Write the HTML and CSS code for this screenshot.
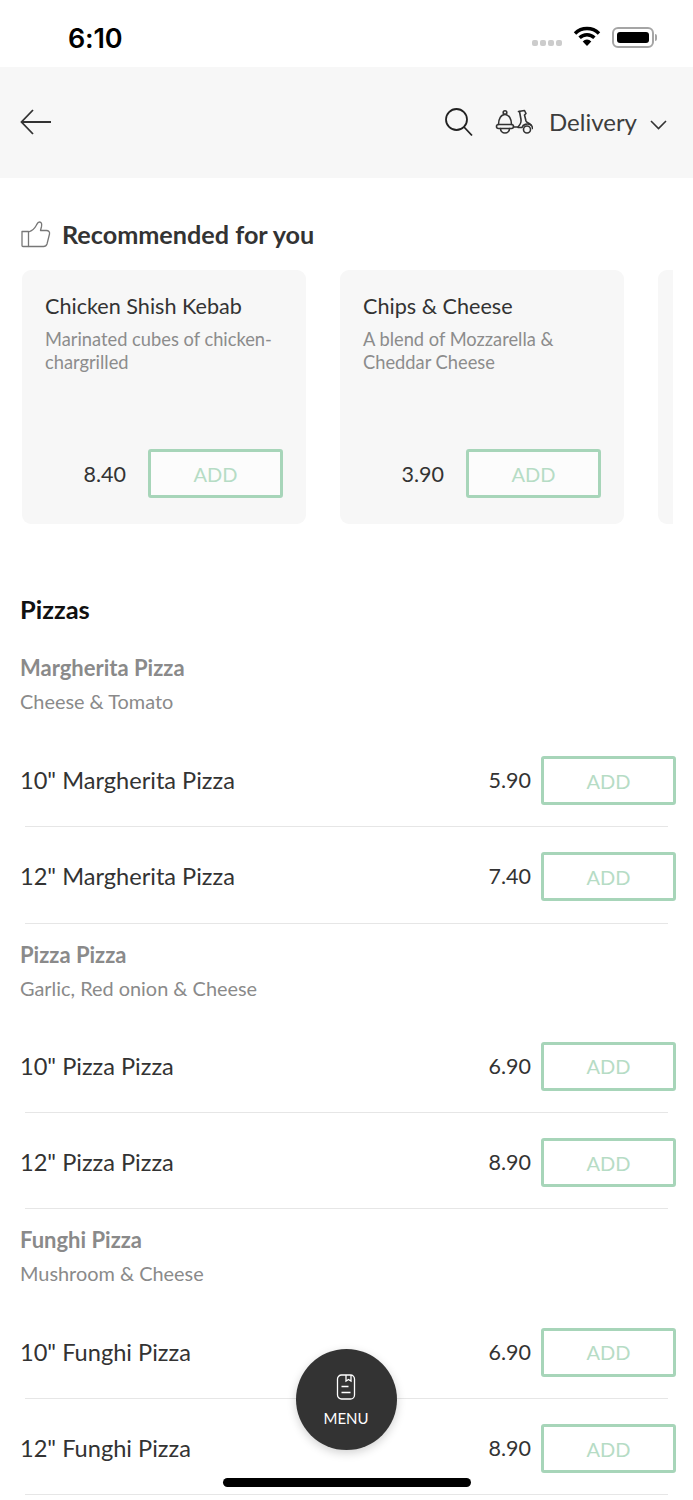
FILE: index.html
```html
<!DOCTYPE html>
<html lang="en">

<head>
    <meta charset="UTF-8">
    <meta name="viewport" content="width=device-width, initial-scale=1.0">
    <title>Menu</title>
    <link rel="stylesheet" href="styles.css">
</head>

<body>
    <div class="status">
        <div class="time">6:10</div>
        <div class="status-icons">
            <div class="signal"><i></i><i></i><i></i><i></i></div>
            <svg class="wifi" width="28" height="22" viewBox="0 0 28 22">
                <path d="M2 8.500a17 17 0 0 1 24 0" fill="none" stroke="#000" stroke-width="3.400" />
                <path d="M6.600 12.800a10.500 10.500 0 0 1 14.800 0" fill="none" stroke="#000" stroke-width="3.400" />
                <path d="M14 21l-4.300-4.600a6 6 0 0 1 8.600 0z" fill="#000" />
            </svg>
            <div class="battery"><div class="battery-fill"></div></div>
            <div class="battery-cap"></div>
        </div>
    </div>

    <div class="header">
        <svg class="back" width="32" height="28" viewBox="0 0 32 28">
            <path d="M31 14H2M13 2L1.500 14L13 26" fill="none" stroke="#333" stroke-width="1.800" />
        </svg>
        <div class="header-right">
            <svg class="search" width="30" height="30" viewBox="0 0 30 30">
                <circle cx="12.500" cy="12.500" r="10.500" fill="none" stroke="#222" stroke-width="1.800" />
                <path d="M20 20l8 8.500" fill="none" stroke="#222" stroke-width="1.800" />
            </svg>
            <svg class="scooter" width="38" height="26" viewBox="0 0 38 26">
                <g fill="none" stroke="#333" stroke-width="1.600" stroke-linejoin="round" stroke-linecap="round">
                    <circle cx="10" cy="3.500" r="1.800" />
                    <path d="M3.500 15.500c0-5.500 2.500-10 6.500-10s6.500 4.500 6.500 10" />
                    <rect x="1.500" y="15.500" width="17" height="4" rx="2" />
                    <path d="M5.500 19.500a4.500 4.500 0 0 0 9 0" />
                    <path d="M23.500 2.500l6-1 1.500 3-1.500 1.500 1.500 6c.5 1.500 3 2 5 4 1 1 1.500 2 1.500 3.500" />
                    <path d="M24.500 2.500l1.500 8c.5 3-1 5.500-3 7.500H18.500" />
                    <path d="M23 18.500h4c1-3 5-4.500 9-2.500" />
                    <circle cx="32" cy="20.500" r="3.500" />
                </g>
            </svg>
            <span class="delivery">Delivery</span>
            <svg class="chevron" width="17" height="10" viewBox="0 0 17 10">
                <path d="M1 1l7.500 7.500L16 1" fill="none" stroke="#333" stroke-width="1.600" />
            </svg>
        </div>
    </div>

    <div class="rec-title">
        <svg width="30" height="27" viewBox="0 0 30 27">
            <g fill="none" stroke="#777" stroke-width="1.300" stroke-linejoin="round">
                <path d="M1 10.500h6.500v15H2a1 1 0 0 1-1-1z" />
                <path d="M7.500 11c3-1 6.500-4 8-7 .8-1.600 1.200-3 3-3 2 0 2.500 2 2 4.500L19.500 9.500h6c2 0 3.500 1.500 3 3.500l-2.500 10c-.5 1.500-1.500 2.500-3.500 2.500H7.500" />
            </g>
        </svg>
        <span>Recommended for you</span>
    </div>

    <div class="cards">
        <div class="card">
            <div class="card-name">Chicken Shish Kebab</div>
            <div class="card-desc">Marinated cubes of chicken-chargrilled</div>
            <div class="card-foot">
                <span class="price">8.40</span>
                <div class="add">ADD</div>
            </div>
        </div>
        <div class="card">
            <div class="card-name">Chips &amp; Cheese</div>
            <div class="card-desc">A blend of Mozzarella &amp; Cheddar Cheese</div>
            <div class="card-foot">
                <span class="price">3.90</span>
                <div class="add">ADD</div>
            </div>
        </div>
        <div class="card"></div>
    </div>

    <h2 class="section-title">Pizzas</h2>

    <div class="group first">
        <div class="group-name">Margherita Pizza</div>
        <div class="group-desc">Cheese &amp; Tomato</div>
    </div>
    <div class="row">
        <span class="row-name">10" Margherita Pizza</span>
        <span class="price">5.90</span>
        <div class="add">ADD</div>
    </div>
    <div class="row">
        <span class="row-name">12" Margherita Pizza</span>
        <span class="price">7.40</span>
        <div class="add">ADD</div>
    </div>

    <div class="group">
        <div class="group-name">Pizza Pizza</div>
        <div class="group-desc">Garlic, Red onion &amp; Cheese</div>
    </div>
    <div class="row">
        <span class="row-name">10" Pizza Pizza</span>
        <span class="price">6.90</span>
        <div class="add">ADD</div>
    </div>
    <div class="row">
        <span class="row-name">12" Pizza Pizza</span>
        <span class="price">8.90</span>
        <div class="add">ADD</div>
    </div>

    <div class="group">
        <div class="group-name">Funghi Pizza</div>
        <div class="group-desc">Mushroom &amp; Cheese</div>
    </div>
    <div class="row">
        <span class="row-name">10" Funghi Pizza</span>
        <span class="price">6.90</span>
        <div class="add">ADD</div>
    </div>
    <div class="row">
        <span class="row-name">12" Funghi Pizza</span>
        <span class="price">8.90</span>
        <div class="add">ADD</div>
    </div>

    <div class="menu-btn">
        <svg width="20" height="26" viewBox="0 0 20 26">
            <g fill="none" stroke="#fff" stroke-width="1.300">
                <rect x="1.500" y="1" width="17" height="24" rx="4" />
                <path d="M10 1v6l2.500-1.500L15 7V1" />
                <path d="M5.500 12.500h7M5.500 18.500h9" />
            </g>
        </svg>
        <span>MENU</span>
    </div>
    <div class="home-bar"></div>
</body>

</html>
```

FILE: styles.css
```css
* {
    box-sizing: border-box;
}

body {
    margin: 0;
    height: 1500px;
    overflow: hidden;
    position: relative;
    background-color: #fff;
    color: #333;
    font-family: Lato, "Open Sans", sans-serif;
}

.status {
    height: 67px;
    display: flex;
    justify-content: space-between;
    align-items: center;
    padding: 8px 36px 0 68px;
}

.time {
    font-family: Inter, Roboto, sans-serif;
    font-size: 27px;
    font-weight: 600;
    color: #000;
    letter-spacing: -.2px;
    margin-top: 2px;
}

.status-icons {
    display: flex;
    align-items: center;
}

.signal {
    display: flex;
    gap: 2px;
    margin: 10px 11px 0 0;
}

.signal i {
    width: 6px;
    height: 6px;
    border-radius: 2px;
    background-color: #ccc;
}

.wifi {
    margin: -4px 11px 0 0;
}

.battery {
    width: 42px;
    height: 21px;
    padding: 3px;
    border: 2px solid #a5a5a5;
    border-radius: 6px;
}

.battery-fill {
    height: 100%;
    background-color: #000;
    border-radius: 3px;
}

.battery-cap {
    width: 2px;
    height: 7px;
    margin-left: 1px;
    background-color: #a5a5a5;
    border-radius: 0 2px 2px 0;
}

.header {
    height: 111px;
    display: flex;
    justify-content: space-between;
    align-items: center;
    padding: 0 26px 2px 20px;
    background-color: #f7f7f7;
}

.header-right {
    display: flex;
    align-items: center;
}

.search {
    margin-right: 21px;
}

.scooter {
    margin-right: 16px;
}

.delivery {
    font-size: 24px;
    color: #3d3d3d;
    margin-right: 13px;
}

.chevron {
    margin-top: 6px;
}

.rec-title {
    display: flex;
    align-items: center;
    gap: 11px;
    height: 92px;
    padding: 20px 0 0 21px;
    font-size: 25.200px;
    font-weight: 700;
    color: #333;
}

.cards {
    display: flex;
    gap: 34px;
    margin-left: 22px;
    overflow: hidden;
    width: 651px;
}

.card {
    flex: 0 0 284px;
    height: 254px;
    padding: 22px 23px 26px;
    display: flex;
    flex-direction: column;
    background-color: #f7f7f7;
    border-radius: 9px;
}

.card-name {
    font-size: 21.600px;
    line-height: 28px;
    color: #333;
}

.card-desc {
    margin-top: 8px;
    font-size: 18.300px;
    line-height: 22.500px;
    color: #8c8c8c;
}

.card-foot {
    margin-top: auto;
    display: flex;
    justify-content: flex-end;
    align-items: center;
    gap: 22px;
}

.price {
    font-size: 21.500px;
    color: #333;
}

.add {
    width: 135px;
    height: 49px;
    display: flex;
    justify-content: center;
    align-items: center;
    border: 3px solid #a7d5b9;
    border-radius: 3px;
    background-color: #fcfcfc;
    color: #b6dcc5;
    font-size: 20px;
}

.section-title {
    margin: 70px 0 0 20px;
    font-size: 25.500px;
    line-height: 30px;
    font-weight: 700;
    color: #111;
}

.group {
    height: 93.300px;
    padding: 16px 0 0 20px;
}

.group.first {
    height: 107px;
    padding-top: 29px;
}

.group-name {
    font-size: 22px;
    line-height: 30px;
    font-weight: 700;
    color: #8a8a8a;
}

.group-desc {
    margin-top: 3px;
    font-size: 19.900px;
    line-height: 30px;
    color: #8a8a8a;
}

.row {
    height: 96.300px;
    display: flex;
    align-items: flex-start;
    padding: 25px 17px 0 20px;
    position: relative;
}

.row::after {
    content: "";
    position: absolute;
    left: 25px;
    right: 25px;
    bottom: 0;
    height: 1px;
    background-color: #e6e6e6;
}

.row .add {
    background-color: #fff;
}

.row-name {
    flex: 1;
    font-size: 23.600px;
    line-height: 49px;
    color: #333;
}

.row .price {
    line-height: 49px;
    margin-right: 10px;
}

.menu-btn {
    position: absolute;
    left: 296px;
    top: 1349px;
    width: 101px;
    height: 101px;
    display: flex;
    flex-direction: column;
    align-items: center;
    padding: 25px 1px 0 0;
    gap: 9px;
    border-radius: 50%;
    background-color: #333;
    box-shadow: 0 3px 10px rgba(0, 0, 0, .18);
    color: #fff;
    font-size: 15px;
}

.home-bar {
    position: absolute;
    left: 223px;
    top: 1478px;
    width: 248px;
    height: 9px;
    border-radius: 5px;
    background-color: #000;
}
```
